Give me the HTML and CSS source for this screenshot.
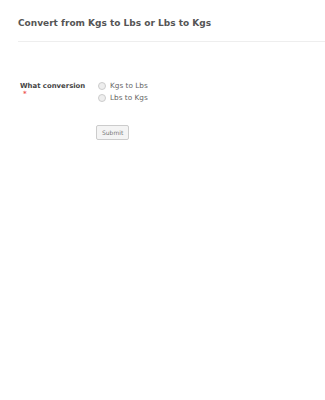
FILE: index.html
```html
<!DOCTYPE html>
<html>
<head>
<meta charset="utf-8">
<link rel="stylesheet" href="styles.css">
</head>
<body>
<div class="form">
  <div class="header">
    <h1 class="title">Convert from Kgs to Lbs or Lbs to Kgs</h1>
  </div>
  <div class="row">
    <div class="label">What conversion<span class="req">*</span></div>
    <div class="options">
      <label class="opt"><span class="radio"></span>Kgs to Lbs</label>
      <label class="opt"><span class="radio"></span>Lbs to Kgs</label>
    </div>
  </div>
  <div class="actions">
    <button class="submit">Submit</button>
  </div>
</div>
</body>
</html>
```
FILE: styles.css
```css
html, body { margin: 0; padding: 0; background: #fff; }
body { font-family: "DejaVu Sans", Verdana, sans-serif; color: #555; }
.form { padding: 0 0 0 18px; }
.header { padding-top: 17px; padding-bottom: 11px; border-bottom: 1px solid #eee; }
.title { margin: 0; font-size: 9px; font-weight: bold; color: #555; line-height: 13px; }
.row { display: flex; margin-top: 38px; }
.label { flex: 0 0 78px; box-sizing: border-box; padding-left: 2px; font-size: 6.9px; font-weight: bold; color: #444; line-height: 12px; white-space: nowrap; }
.req { display: block; color: #e55; font-size: 7px; line-height: 5px; padding-left: 3px; }
.options { display: flex; flex-direction: column; gap: 1px; padding-left: 2px; }
.opt { display: flex; align-items: center; font-size: 7.3px; color: #666; line-height: 11px; }
.radio { width: 6px; height: 6px; border-radius: 50%; border: 1px solid #ccc; background: #eee; margin-right: 4px; }
.actions { padding-left: 78px; margin-top: 17px; }
.submit { font-family: inherit; font-size: 6px; color: #777; background: #f4f4f4; border: 1px solid #ccc; border-radius: 2px; padding: 3px 5px; line-height: 7px; }
```
